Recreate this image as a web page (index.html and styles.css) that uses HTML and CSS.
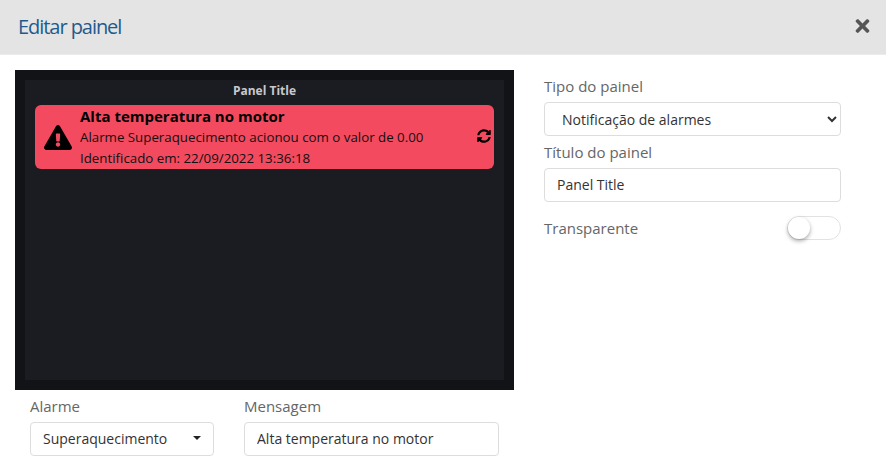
FILE: index.html
```html
<!DOCTYPE html>
<html lang="en">
<head>
  <meta charset="UTF-8">
  <title>Editar painel</title>
  <link rel="stylesheet" href="styles.css">
</head>
<body>

  <div class="modal-header">
    <h2>Editar painel</h2>
    <svg class="close-icon" viewBox="0 0 352 512"><path d="M242.72 256l100.07-100.07c12.28-12.28 12.28-32.19 0-44.48l-22.24-22.24c-12.28-12.28-32.19-12.28-44.48 0L176 189.28 75.93 89.21c-12.28-12.28-32.19-12.28-44.48 0L9.21 111.45c-12.28 12.28-12.28 32.19 0 44.48L109.28 256 9.21 356.07c-12.28 12.28-12.28 32.19 0 44.48l22.24 22.24c12.28 12.28 32.2 12.28 44.48 0L176 322.72l100.07 100.07c12.28 12.28 32.2 12.28 44.48 0l22.24-22.24c12.28-12.28 12.28-32.19 0-44.48L242.72 256z"/></svg>
  </div>

  <div class="modal-body">
    <div class="left-col">
      <div class="preview">
        <div class="panel">
          <div class="panel-title">Panel Title</div>
          <div class="alert">
            <svg class="alert-icon" viewBox="0 0 576 512"><path d="M569.517 440.013C587.975 472.007 564.806 512 527.94 512H48.054c-36.937 0-59.999-40.055-41.577-71.987L246.423 23.985c18.467-32.009 64.72-31.951 83.154 0l239.94 416.028zM288 354c-25.405 0-46 20.595-46 46s20.595 46 46 46 46-20.595 46-46-20.595-46-46-46zm-43.673-165.346l7.418 136c.347 6.364 5.609 11.346 11.982 11.346h48.546c6.373 0 11.635-4.982 11.982-11.346l7.418-136c.375-6.874-5.098-12.654-11.982-12.654h-63.383c-6.884 0-12.356 5.78-11.981 12.654z"/></svg>
            <div class="alert-text">
              <strong>Alta temperatura no motor</strong>
              <span>Alarme Superaquecimento acionou com o valor de 0.00</span>
              <span>Identificado em: 22/09/2022 13:36:18</span>
            </div>
            <svg class="sync-icon" viewBox="0 0 512 512"><path d="M370.72 133.28C339.458 104.008 298.888 87.962 255.848 88c-77.458.068-144.328 53.178-162.791 126.85-1.344 5.363-6.122 9.15-11.651 9.15H24.103c-7.498 0-13.194-6.807-11.807-14.176C33.933 94.924 134.813 8 256 8c66.448 0 126.791 26.136 171.315 68.685L463.03 40.97C478.149 25.851 504 36.559 504 57.941V192c0 13.255-10.745 24-24 24H345.941c-21.382 0-32.09-25.851-16.971-40.971l41.75-41.749zM32 296h134.059c21.382 0 32.09 25.851 16.971 40.971l-41.75 41.75c31.262 29.273 71.835 45.319 114.876 45.28 77.418-.07 144.315-53.144 162.787-126.849 1.344-5.363 6.122-9.15 11.651-9.15h57.304c7.498 0 13.194 6.807 11.807 14.176C478.067 417.076 377.187 504 256 504c-66.448 0-126.791-26.136-171.315-68.685L48.97 471.03C33.851 486.149 8 475.441 8 454.059V320c0-13.255 10.745-24 24-24z"/></svg>
          </div>
        </div>
      </div>

      <div class="bottom-fields">
        <div class="field field-alarm">
          <label>Alarme</label>
          <div class="dropdown">
            <span>Superaquecimento</span>
            <i class="caret"></i>
          </div>
        </div>
        <div class="field field-message">
          <label>Mensagem</label>
          <input type="text" class="control" value="Alta temperatura no motor">
        </div>
      </div>
    </div>

    <div class="right-col">
      <div class="field">
        <label>Tipo do painel</label>
        <select class="control select-control">
          <option>Notificação de alarmes</option>
        </select>
      </div>
      <div class="field">
        <label>Título do painel</label>
        <input type="text" class="control" value="Panel Title">
      </div>
      <div class="toggle-row">
        <label>Transparente</label>
        <div class="toggle"><div class="knob"></div></div>
      </div>
    </div>
  </div>

</body>
</html>
```

FILE: styles.css
```css
* {
  box-sizing: border-box;
}

html, body {
  height: 100%;
}

body {
  margin: 0;
  font-family: 'Open Sans', sans-serif;
  background: white;
  overflow: hidden;
}

.modal-header {
  height: 55px;
  background: #e4e4e4;
  border-bottom: 1px solid #ececec;
  padding: 0 16px 1px 18px;
  display: flex;
  align-items: center;
  justify-content: space-between;
}

.modal-header h2 {
  margin: 0;
  font-size: 20px;
  font-weight: 400;
  letter-spacing: -1.05px;
  color: #1f5a8c;
}

.close-icon {
  width: 15px;
  height: 20px;
  margin-top: -2px;
  fill: #555;
}

.modal-body {
  display: flex;
  gap: 30px;
  padding: 15px 0 0 15px;
}

.left-col {
  width: 499px;
}

.right-col {
  width: 297px;
  padding-top: 6px;
}

.preview {
  height: 320px;
  background: #121317;
  padding: 10px;
}

.panel {
  height: 300px;
  background: #1a1c21;
  padding: 0 10px;
}

.panel-title {
  height: 25px;
  line-height: 21px;
  text-align: center;
  font-size: 12px;
  font-weight: 700;
  color: #c7c9cc;
}

.alert {
  height: 64px;
  background: #f34a5f;
  border-radius: 6px;
  display: flex;
  align-items: center;
  padding: 0 3px 0 9px;
  color: #111;
}

.alert-icon {
  width: 28px;
  height: 25px;
  fill: black;
  flex: none;
}

.alert-text {
  flex: 1;
  margin-left: 8px;
  padding-top: 2px;
  display: flex;
  flex-direction: column;
  font-size: 13.3px;
  line-height: 21px;
}

.alert-text strong {
  font-size: 15px;
  line-height: 23px;
  margin-top: -2px;
  margin-bottom: -1px;
  color: black;
}

.sync-icon {
  width: 14px;
  height: 14px;
  margin-top: -2px;
  fill: black;
  flex: none;
}

.field label,
.toggle-row label {
  display: block;
  font-size: 15px;
  line-height: 20px;
  color: #666;
}

.field label {
  margin-bottom: 6px;
}

.control {
  display: block;
  width: 100%;
  height: 34px;
  border: 1px solid #ddd;
  border-radius: 4px;
  background: white;
  padding: 0 12px 2px;
  font-family: 'Open Sans', sans-serif;
  font-size: 14px;
  color: #333;
  outline: none;
}

.select-control {
  padding: 0 0 0 13px;
}

.right-col .field {
  margin-bottom: 6px;
}

.right-col .field + .field {
  margin-bottom: 0;
}

.toggle-row {
  display: flex;
  align-items: center;
  justify-content: space-between;
  margin-top: 14px;
}

.toggle {
  width: 54px;
  height: 24px;
  border: 1px solid #e2e2e2;
  border-radius: 12px;
  background: white;
}

.knob {
  width: 22px;
  height: 22px;
  border-radius: 50%;
  background: white;
  box-shadow: 0 2px 4px rgba(0, 0, 0, 0.35);
}

.bottom-fields {
  display: flex;
  gap: 30px;
  padding: 6px 15px 0;
}

.field-alarm {
  width: 184px;
}

.field-message {
  width: 255px;
}

.dropdown {
  height: 34px;
  border: 1px solid #ddd;
  border-radius: 4px;
  padding: 0 12px 2px;
  display: flex;
  align-items: center;
  justify-content: space-between;
  font-size: 14px;
  color: #333;
}

.caret {
  width: 0;
  height: 0;
  border-left: 4px solid transparent;
  border-right: 4px solid transparent;
  border-top: 4px solid #222;
}
```
